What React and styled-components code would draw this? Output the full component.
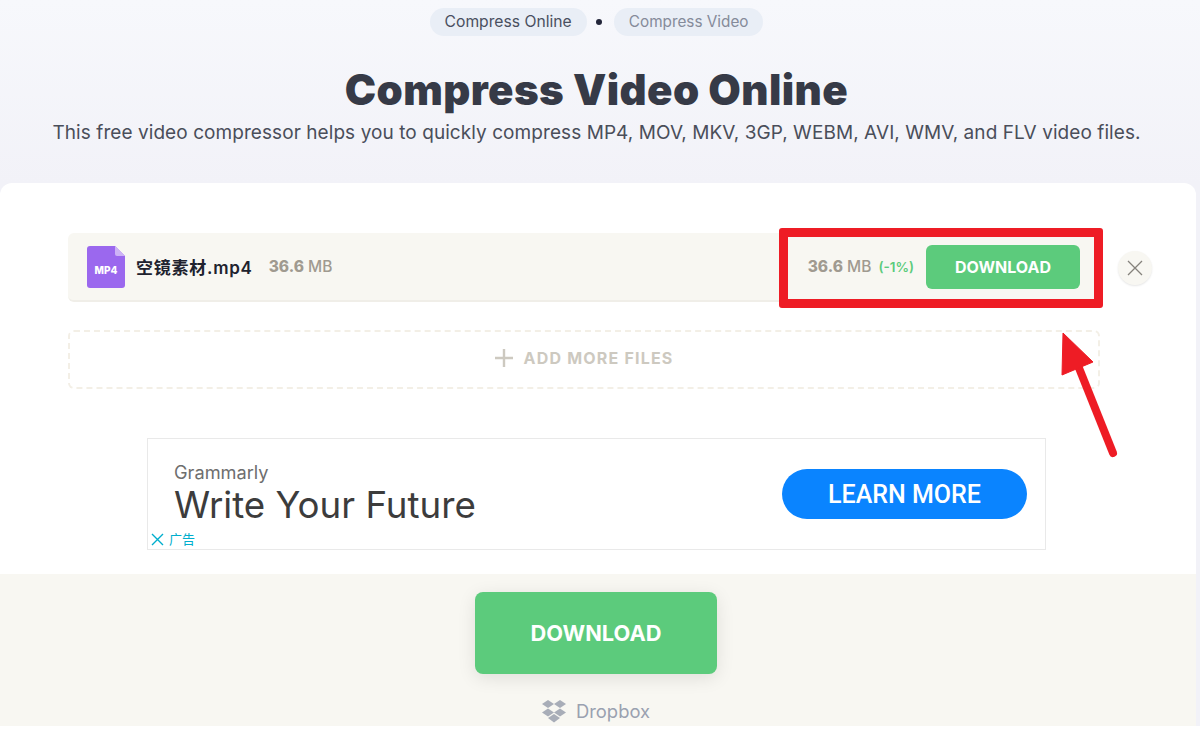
import React from 'react';
import styled, { createGlobalStyle } from 'styled-components';

const sans = `"Inter", "Noto Sans CJK SC", "Liberation Sans", sans-serif`;

const GlobalStyle = createGlobalStyle`
    html, body {
        margin: 0;
        padding: 0;
        background: #fff;
        font-family: ${sans};
    }
`;

const Page = styled.div`
    position: relative;
    width: 1200px;
    height: 734px;
    overflow: hidden;
    background: linear-gradient(#f7f8fc, #f2f2f8 184px);
`;

const Header = styled.header`
    width: 1193px;
    height: 183px;
    padding-top: 8px;
    box-sizing: border-box;
    text-align: center;
`;

const Crumbs = styled.div`
    display: flex;
    justify-content: center;
    align-items: center;
`;

const Crumb = styled.span`
    height: 28px;
    line-height: 28px;
    padding: 0 15px;
    border-radius: 14px;
    background: #e9eef6;
    font-size: ${p => (p.$muted ? '15.3px' : '15.7px')};
    color: ${p => (p.$muted ? '#858b9a' : '#4a5060')};
`;

const Dot = styled.i`
    width: 6px;
    height: 6px;
    margin: 0 12px 0 9px;
    border-radius: 50%;
    background: #23263a;
`;

const Title = styled.h1`
    margin: 29px 0 0;
    font-size: 42px;
    line-height: 50px;
    font-weight: 900;
    letter-spacing: 0.4px;
    color: #363a47;
`;

const Lead = styled.p`
    margin: 5px 0 0;
    font-size: 19px;
    line-height: 26px;
    letter-spacing: 0.07px;
    color: #4a4e5a;
`;

const Card = styled.main`
    width: 1196px;
    height: 391px;
    box-sizing: border-box;
    padding: 50px 44px 0 68px;
    background: #fff;
    border-radius: 12px 12px 0 0;
`;

const FileLine = styled.div`
    display: flex;
    align-items: center;
    gap: 18px;
`;

const FileRow = styled.div`
    flex: 0 0 1032px;
    height: 69px;
    box-sizing: border-box;
    display: flex;
    align-items: center;
    padding: 0 20px 0 19px;
    background: #f8f7f2;
    border-bottom: 2px solid #f0eee8;
    border-radius: 6px;
`;

const FileName = styled.span`
    margin-left: 11px;
    font-size: 17px;
    font-weight: 600;
    letter-spacing: 0.75px;
    color: #20222e;
`;

const Size = styled.span`
    margin-left: ${p => (p.$push ? 'auto' : '16px')};
    font-size: 15.5px;
    font-weight: 500;
    color: #a09a90;
    b {
        font-weight: 800;
    }
`;

const Saved = styled.span`
    margin: 0 12px 0 7px;
    font-size: 13.5px;
    font-weight: 600;
    color: #5ccb7c;
`;

const SmallButton = styled.button`
    width: 154px;
    height: 44px;
    border: 0;
    border-radius: 6px;
    background: #5ccb7c;
    color: #fff;
    font: 700 16px ${sans};
`;

const CloseButton = styled.button`
    flex: none;
    width: 34px;
    height: 34px;
    padding: 0;
    display: flex;
    align-items: center;
    justify-content: center;
    border: 0;
    border-radius: 50%;
    background: #f8f7f2;
    box-shadow: 0 1px 2px rgba(0, 0, 0, 0.1);
`;

const AddMore = styled.div`
    width: 1032px;
    height: 59px;
    box-sizing: border-box;
    margin-top: 28px;
    padding-bottom: 3px;
    display: flex;
    align-items: center;
    justify-content: center;
    gap: 9px;
    border: 2px dashed #f3efe6;
    border-radius: 6px;
    font-size: 16px;
    font-weight: 700;
    letter-spacing: 1.2px;
    color: #cdc9c0;
`;

const Ad = styled.aside`
    position: relative;
    width: 899px;
    height: 112px;
    box-sizing: border-box;
    margin: 49px 0 0 79px;
    display: flex;
    align-items: center;
    justify-content: space-between;
    padding: 0 18px 0 26px;
    border: 1px solid #e9e9e9;
    background: #fff;
`;

const AdCopy = styled.div`
    margin-top: 0;
`;

const AdBrand = styled.div`
    font: 400 18.2px/22px Inter, sans-serif;
    color: #6e6e6e;
`;

const AdHeadline = styled.div`
    font: 400 36.7px/44px Inter, sans-serif;
    color: #3c3c3c;
`;

const AdButton = styled.button`
    width: 245px;
    height: 50px;
    border: 0;
    border-radius: 25px;
    background: #0a84ff;
    color: #fff;
    font: 500 25px Roboto, sans-serif;
`;

const AdBadge = styled.div`
    position: absolute;
    left: 3px;
    bottom: 2px;
    display: flex;
    align-items: center;
    gap: 5px;
    font: 13px/16px "Noto Sans CJK SC", sans-serif;
    color: #00aecd;
`;

const Band = styled.section`
    width: 1196px;
    height: 152px;
    box-sizing: border-box;
    padding-top: 18px;
    display: flex;
    flex-direction: column;
    align-items: center;
    background: #f8f7f2;
`;

const BigButton = styled.button`
    flex: none;
    width: 242px;
    height: 82px;
    margin-right: 4px;
    border: 0;
    border-radius: 8px;
    background: #5ccb7c;
    box-shadow: 0 4px 18px rgba(0, 0, 0, 0.1);
    color: #fff;
    font: 700 21.8px ${sans};
`;

const Provider = styled.div`
    margin: 24px 4px 0 0;
    display: flex;
    align-items: center;
    gap: 10px;
    font-size: 18.4px;
    line-height: 26px;
    color: #9aa1b0;
`;

const BottomStrip = styled.div`
    height: 8px;
    background: #fff;
`;

const Highlight = styled.div`
    position: absolute;
    left: 779px;
    top: 228px;
    width: 324px;
    height: 80px;
    box-sizing: border-box;
    border: 9px solid #ee1c25;
    border-radius: 3px;
`;

const Arrow = styled.svg`
    position: absolute;
    left: 1050px;
    top: 325px;
`;

const FileIcon = () => (
    <svg width="38" height="42" viewBox="0 0 38 42">
        <path d="M3 0h25l10 10v29a3 3 0 0 1-3 3H3a3 3 0 0 1-3-3V3a3 3 0 0 1 3-3z" fill="#9b68ee" />
        <path d="M28 0l10 10H30a2 2 0 0 1-2-2z" fill="#cdb3f6" />
        <text x="19" y="28" textAnchor="middle" fontSize="10" fontWeight="800" fontFamily="Inter, sans-serif" fill="#fff">MP4</text>
    </svg>
);

const DropboxIcon = () => (
    <svg width="24" height="24" viewBox="0 0 24 24" fill="#a8adb8">
        <path d="M6 1l6 4-6 4-6-4z" />
        <path d="M18 1l6 4-6 4-6-4z" />
        <path d="M6 9.5l6 4-6 4-6-4z" />
        <path d="M18 9.5l6 4-6 4-6-4z" />
        <path d="M12 15l6 4-6 4.5L6 19z" />
    </svg>
);

export default function App() {
    return (
        <Page>
            <GlobalStyle />
            <Header>
                <Crumbs>
                    <Crumb>Compress Online</Crumb>
                    <Dot />
                    <Crumb $muted>Compress Video</Crumb>
                </Crumbs>
                <Title>Compress Video Online</Title>
                <Lead>This free video compressor helps you to quickly compress MP4, MOV, MKV, 3GP, WEBM, AVI, WMV, and FLV video files.</Lead>
            </Header>
            <Card>
                <FileLine>
                    <FileRow>
                        <FileIcon />
                        <FileName>空镜素材.mp4</FileName>
                        <Size><b>36.6</b> MB</Size>
                        <Size $push><b>36.6</b> MB</Size>
                        <Saved>(-1%)</Saved>
                        <SmallButton>DOWNLOAD</SmallButton>
                    </FileRow>
                    <CloseButton aria-label="remove">
                        <svg width="16" height="16" viewBox="0 0 16 16" stroke="#85827c" strokeWidth="1.3">
                            <path d="M1 1l14 14M15 1L1 15" />
                        </svg>
                    </CloseButton>
                </FileLine>
                <AddMore>
                    <svg width="20" height="20" viewBox="0 0 20 20" fill="#cdc9c0">
                        <path d="M8.8 1h2.4v7.8H19v2.4h-7.8V19H8.8v-7.8H1V8.8h7.8z" />
                    </svg>
                    ADD MORE FILES
                </AddMore>
                <Ad>
                    <AdCopy>
                        <AdBrand>Grammarly</AdBrand>
                        <AdHeadline>Write Your Future</AdHeadline>
                    </AdCopy>
                    <AdButton>LEARN MORE</AdButton>
                    <AdBadge>
                        <svg width="13" height="13" viewBox="0 0 13 13" stroke="#00aecd" strokeWidth="1.4">
                            <path d="M1 1l11 11M12 1L1 12" />
                        </svg>
                        广告
                    </AdBadge>
                </Ad>
            </Card>
            <Band>
                <BigButton>DOWNLOAD</BigButton>
                <Provider>
                    <DropboxIcon />
                    Dropbox
                </Provider>
            </Band>
            <BottomStrip />
            <Highlight />
            <Arrow width="80" height="140" viewBox="0 0 80 140">
                <path d="M63 128L27 38" stroke="#ee1c25" strokeWidth="8" strokeLinecap="round" />
                <path d="M13 8L43 37 12 50z" fill="#ee1c25" stroke="#ee1c25" />
            </Arrow>
        </Page>
    );
}
